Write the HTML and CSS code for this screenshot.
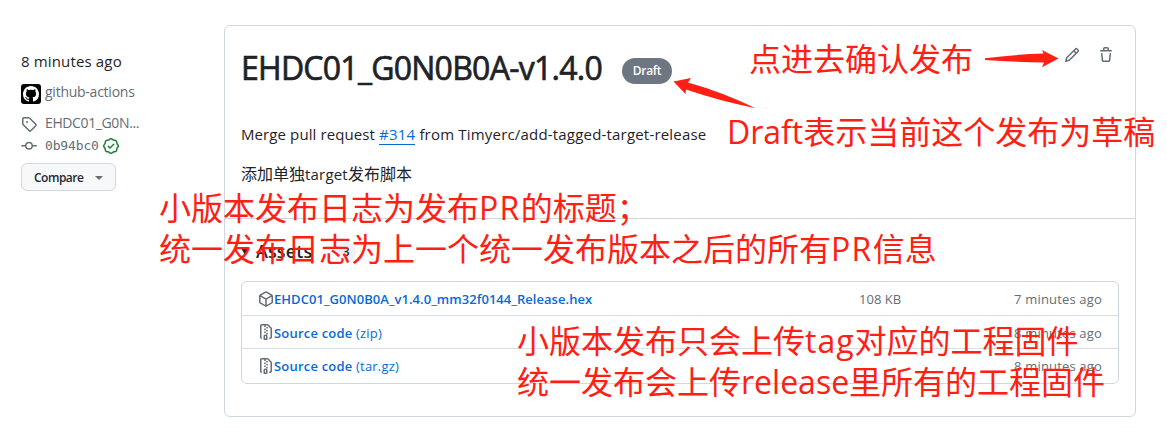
FILE: index.html
```html
<!DOCTYPE html>
<html lang="zh-CN">
<head>
<meta charset="utf-8">
<title>EHDC01_G0N0B0A-v1.4.0</title>
<link rel="stylesheet" href="styles.css">
</head>
<body>
<div class="page">
  <aside class="meta">
    <div class="meta-date"><span class="t-date">8 minutes ago</span></div>
    <div class="meta-author">
      <svg class="avatar" width="20" height="20" viewBox="0 0 20 20"><rect width="20" height="20" rx="3" fill="#000"/><path transform="translate(2 2)" fill="#fff" d="M8 0c4.42 0 8 3.58 8 8a8.013 8.013 0 0 1-5.45 7.59c-.4.08-.55-.17-.55-.38 0-.27.01-1.13.01-2.2 0-.75-.25-1.23-.54-1.48 1.78-.2 3.65-.88 3.65-3.95 0-.88-.31-1.59-.82-2.15.08-.2.36-1.02-.08-2.12 0 0-.67-.22-2.2.82-.64-.18-1.32-.27-2-.27-.68 0-1.36.09-2 .27-1.53-1.03-2.2-.82-2.2-.82-.44 1.1-.16 1.92-.08 2.12-.51.56-.82 1.28-.82 2.15 0 3.06 1.86 3.75 3.64 3.95-.23.2-.44.55-.51 1.07-.46.21-1.61.55-2.33-.66-.15-.24-.6-.83-1.23-.82-.67.01-.27.38.01.53.34.19.73.9.82 1.13.16.45.68 1.31 2.69.94 0 .67.01 1.3.01 1.49 0 .21-.15.45-.55.38A7.995 7.995 0 0 1 0 8c0-4.42 3.58-8 8-8Z"/></svg>
      <span class="t-author">github-actions</span>
    </div>
    <div class="meta-tag">
      <svg class="icon" width="16" height="16" viewBox="0 0 16 16"><path d="M1 7.775V2.75C1 1.784 1.784 1 2.75 1h5.025c.464 0 .91.184 1.238.513l6.25 6.25a1.75 1.75 0 0 1 0 2.474l-5.026 5.026a1.75 1.75 0 0 1-2.474 0l-6.25-6.25A1.752 1.752 0 0 1 1 7.775Zm1.5 0c0 .066.026.13.073.177l6.25 6.25a.25.25 0 0 0 .354 0l5.025-5.025a.25.25 0 0 0 0-.354l-6.25-6.25a.25.25 0 0 0-.177-.073H2.75a.25.25 0 0 0-.25.25ZM6 5a1 1 0 1 1 0 2 1 1 0 0 1 0-2Z"/></svg>
      <span class="t-tag">EHDC01_G0N...</span>
    </div>
    <div class="meta-commit">
      <svg class="icon" width="16" height="16" viewBox="0 0 16 16"><path d="M11.93 8.5a4.002 4.002 0 0 1-7.86 0H.75a.75.75 0 0 1 0-1.5h3.32a4.002 4.002 0 0 1 7.86 0h3.32a.75.75 0 0 1 0 1.5Zm-1.43-.75a2.5 2.5 0 1 0-5 0 2.5 2.5 0 0 0 5 0Z"/></svg>
      <code class="t-sha">0b94bc0</code>
      <svg class="verified" width="16" height="16" viewBox="0 0 16 16"><path d="m9.585.52.929.68c.153.112.331.186.518.215l1.138.175a2.678 2.678 0 0 1 2.24 2.24l.174 1.139c.029.187.103.365.215.518l.68.928a2.677 2.677 0 0 1 0 3.17l-.68.928a1.174 1.174 0 0 0-.215.518l-.175 1.138a2.678 2.678 0 0 1-2.241 2.241l-1.138.175a1.17 1.17 0 0 0-.518.215l-.928.68a2.677 2.677 0 0 1-3.17 0l-.928-.68a1.174 1.174 0 0 0-.518-.215L3.83 14.41a2.678 2.678 0 0 1-2.24-2.24l-.175-1.138a1.17 1.17 0 0 0-.215-.518l-.68-.928a2.677 2.677 0 0 1 0-3.17l.68-.928c.112-.153.186-.331.215-.518l.175-1.14a2.678 2.678 0 0 1 2.24-2.24l1.139-.175c.187-.029.365-.103.518-.215l.928-.68a2.677 2.677 0 0 1 3.17 0ZM7.303 1.728l-.927.68a2.67 2.67 0 0 1-1.18.489l-1.137.174a1.179 1.179 0 0 0-.987.987l-.174 1.136a2.677 2.677 0 0 1-.489 1.18l-.68.928a1.18 1.18 0 0 0 0 1.394l.68.927c.256.348.424.753.489 1.18l.174 1.137c.078.509.478.909.987.987l1.136.174a2.67 2.67 0 0 1 1.18.489l.928.68c.414.305.979.305 1.394 0l.927-.68a2.67 2.67 0 0 1 1.18-.489l1.137-.174a1.18 1.18 0 0 0 .987-.987l.174-1.136a2.67 2.67 0 0 1 .489-1.18l.68-.928a1.176 1.176 0 0 0 0-1.394l-.68-.927a2.686 2.686 0 0 1-.489-1.18l-.174-1.137a1.179 1.179 0 0 0-.987-.987l-1.136-.174a2.677 2.677 0 0 1-1.18-.489l-.928-.68a1.176 1.176 0 0 0-1.394 0ZM11.28 6.78l-3.75 3.75a.75.75 0 0 1-1.06 0L4.72 8.78a.751.751 0 0 1 .018-1.042.751.751 0 0 1 1.042-.018L7 8.94l3.22-3.22a.751.751 0 0 1 1.042.018.751.751 0 0 1 .018 1.042Z"/></svg>
    </div>
    <button class="compare"><span class="t-compare">Compare</span><span class="caret"></span></button>
  </aside>

  <main class="card">
    <section class="release">
      <header class="head">
        <h1 class="title">EHDC01_G0N0B0A-v1.4.0</h1>
        <span class="badge">Draft</span>
        <div class="actions">
          <svg class="icon" width="16" height="16" viewBox="0 0 16 16"><path d="M11.013 1.427a1.75 1.75 0 0 1 2.474 0l1.086 1.086a1.75 1.75 0 0 1 0 2.474l-8.61 8.61c-.21.21-.47.364-.756.445l-3.251.93a.75.75 0 0 1-.927-.928l.929-3.25c.081-.286.235-.547.445-.758l8.61-8.61Zm.176 4.823L9.75 4.81l-6.286 6.287a.253.253 0 0 0-.064.108l-.558 1.953 1.953-.558a.253.253 0 0 0 .108-.064Zm1.238-3.763a.25.25 0 0 0-.354 0L10.811 3.75l1.439 1.44 1.263-1.263a.25.25 0 0 0 0-.354Z"/></svg>
          <svg class="icon" width="16" height="16" viewBox="0 0 16 16"><path d="M11 1.75V3h2.25a.75.75 0 0 1 0 1.5H2.75a.75.75 0 0 1 0-1.5H5V1.75C5 .784 5.784 0 6.75 0h2.5C10.216 0 11 .784 11 1.75ZM4.496 6.675l.66 6.6a.25.25 0 0 0 .249.225h5.19a.25.25 0 0 0 .249-.225l.66-6.6a.75.75 0 0 1 1.492.149l-.66 6.6A1.748 1.748 0 0 1 10.595 15h-5.19a1.75 1.75 0 0 1-1.741-1.575l-.66-6.6a.75.75 0 1 1 1.492-.15ZM6.5 1.75V3h3V1.75a.25.25 0 0 0-.25-.25h-2.5a.25.25 0 0 0-.25.25Z"/></svg>
        </div>
      </header>
      <p class="body-text"><span class="latin"><span class="lead">Merge pull request</span> <a class="pr" href="#">#314</a> from Timyerc/add-tagged-target-release</span></p>
      <p class="body-text second">添加单独<span class="latin">target</span>发布脚本</p>
    </section>
    <section class="assets">
      <div class="assets-head"><span class="disclosure"></span><span class="t-assets">Assets</span><span class="counter">3</span></div>
      <ul class="list">
        <li class="row first">
          <svg class="icon" width="16" height="16" viewBox="0 0 16 16"><path d="m8.878.392 5.25 3.045c.54.314.872.89.872 1.514v6.098a1.75 1.75 0 0 1-.872 1.514l-5.25 3.045a1.75 1.75 0 0 1-1.756 0l-5.25-3.045A1.75 1.75 0 0 1 1 11.049V4.951c0-.624.332-1.201.872-1.514L7.122.392a1.75 1.75 0 0 1 1.756 0ZM7.875 1.69l-4.63 2.685L8 7.133l4.755-2.758-4.63-2.685a.248.248 0 0 0-.25 0ZM2.5 5.677v5.372c0 .09.047.171.125.216l4.625 2.683V8.432Zm6.25 8.271 4.625-2.683a.25.25 0 0 0 .125-.216V5.677L8.75 8.432Z"/></svg>
          <a class="name t-hex" href="#"><b>EHDC01_G0N0B0A_v1.4.0_mm32f0144_Release.hex</b></a>
          <span class="size">108 KB</span><span class="when">7 minutes ago</span>
        </li>
        <li class="row middle">
          <svg class="icon" width="16" height="16" viewBox="0 0 16 16"><path d="M3.5 1.75v11.5c0 .09.048.173.126.217a.75.75 0 0 1-.752 1.298A1.748 1.748 0 0 1 2 13.25V1.75C2 .784 2.784 0 3.75 0h5.586c.464 0 .909.185 1.237.513l2.914 2.914c.329.328.513.773.513 1.237v8.586A1.75 1.75 0 0 1 12.25 15h-.5a.75.75 0 0 1 0-1.5h.5a.25.25 0 0 0 .25-.25V4.664a.25.25 0 0 0-.073-.177L9.513 1.573a.25.25 0 0 0-.177-.073H7.25a.75.75 0 0 1 0 1.5h-.5a.75.75 0 0 1 0-1.5h-3a.25.25 0 0 0-.25.25Zm3.75 8.75h.5c.966 0 1.75.784 1.75 1.75v3a.75.75 0 0 1-.75.75h-2.5a.75.75 0 0 1-.75-.75v-3c0-.966.784-1.75 1.75-1.75ZM6 5.25a.75.75 0 0 1 .75-.75h.5a.75.75 0 0 1 0 1.5h-.5A.75.75 0 0 1 6 5.25Zm.75 2.25h.5a.75.75 0 0 1 0 1.5h-.5a.75.75 0 0 1 0-1.5ZM8 6.75A.75.75 0 0 1 8.75 6h.5a.75.75 0 0 1 0 1.5h-.5A.75.75 0 0 1 8 6.75ZM8.75 3h.5a.75.75 0 0 1 0 1.5h-.5a.75.75 0 0 1 0-1.5ZM8 9.75A.75.75 0 0 1 8.75 9h.5a.75.75 0 0 1 0 1.5h-.5A.75.75 0 0 1 8 9.75Zm-1 2.5v2.25h1v-2.25a.25.25 0 0 0-.25-.25h-.5a.25.25 0 0 0-.25.25Z"/></svg>
          <a class="name" href="#"><b>Source code</b> <span class="ext">(zip)</span></a>
          <span class="when">8 minutes ago</span>
        </li>
        <li class="row last">
          <svg class="icon" width="16" height="16" viewBox="0 0 16 16"><path d="M3.5 1.75v11.5c0 .09.048.173.126.217a.75.75 0 0 1-.752 1.298A1.748 1.748 0 0 1 2 13.25V1.75C2 .784 2.784 0 3.75 0h5.586c.464 0 .909.185 1.237.513l2.914 2.914c.329.328.513.773.513 1.237v8.586A1.75 1.75 0 0 1 12.25 15h-.5a.75.75 0 0 1 0-1.5h.5a.25.25 0 0 0 .25-.25V4.664a.25.25 0 0 0-.073-.177L9.513 1.573a.25.25 0 0 0-.177-.073H7.25a.75.75 0 0 1 0 1.5h-.5a.75.75 0 0 1 0-1.5h-3a.25.25 0 0 0-.25.25Zm3.75 8.75h.5c.966 0 1.75.784 1.75 1.75v3a.75.75 0 0 1-.75.75h-2.5a.75.75 0 0 1-.75-.75v-3c0-.966.784-1.75 1.75-1.75ZM6 5.25a.75.75 0 0 1 .75-.75h.5a.75.75 0 0 1 0 1.5h-.5A.75.75 0 0 1 6 5.25Zm.75 2.25h.5a.75.75 0 0 1 0 1.5h-.5a.75.75 0 0 1 0-1.5ZM8 6.75A.75.75 0 0 1 8.75 6h.5a.75.75 0 0 1 0 1.5h-.5A.75.75 0 0 1 8 6.75ZM8.75 3h.5a.75.75 0 0 1 0 1.5h-.5a.75.75 0 0 1 0-1.5ZM8 9.75A.75.75 0 0 1 8.75 9h.5a.75.75 0 0 1 0 1.5h-.5A.75.75 0 0 1 8 9.75Zm-1 2.5v2.25h1v-2.25a.25.25 0 0 0-.25-.25h-.5a.25.25 0 0 0-.25.25Z"/></svg>
          <a class="name" href="#"><b>Source code</b> <span class="ext">(tar.gz)</span></a>
          <span class="when">8 minutes ago</span>
        </li>
      </ul>
    </section>
  </main>
</div>

<!-- Red annotations drawn over the release page -->
<svg class="arrows" width="1167" height="428" viewBox="0 0 1167 428">
  <path d="M673.5 81.5 691 78 688 82.5 Q722 92 755.500 108.200 Q720 101 686 89.500 L685.500 94Z"/>
  <path d="M985 58.300 Q1014 54.500 1043.500 53.500 L1042 50 1058.500 58.500 1042 67.200 1044 62.500 Q1014 62 985 60Z"/>
</svg>
<div class="note note-edit">点进去确认发布</div>
<div class="note note-draft"><span class="n-draft">Draft</span>表示当前这个发布为草稿</div>
<div class="note note-log">小版本发布日志为发布<span class="n-pr">PR</span>的标题；<br>统一发布日志为上一个统一发布版本之后的所有<span class="n-pr">PR</span>信息</div>
<div class="note note-assets">小版本发布只会上传<span class="n-tag">tag</span>对应的工程固件<br>统一发布会上传<span class="n-rel">release</span>里所有的工程固件</div>
</body>
</html>
```

FILE: styles.css
```css
* { box-sizing: border-box; }
body {
  margin: 0;
  background: #fff;
  color: #1f2328;
  font: 14px/20px "Open Sans", "Noto Sans", "Noto Sans CJK SC", sans-serif;
  width: 1167px;
  height: 428px;
  overflow: hidden;
  position: relative;
}
.page { display: flex; padding: 25px 0 0 21px; }
.icon { fill: #656d76; flex: none; }
a { color: #0969da; text-decoration: none; }

/* Left column */
.meta { width: 203px; flex: none; padding-top: 26px; color: #656d76; white-space: nowrap; }
.meta-date { color: #1f2328; font-size: 15px; height: 20px; letter-spacing: .15px; }
.meta-author { display: flex; align-items: center; gap: 4px; margin-top: 12px; height: 20px; letter-spacing: -.25px; }
.meta-author .t-author { margin-top: -2px; }
.avatar { margin-top: 1px; }
.meta-tag { display: flex; align-items: center; gap: 8px; margin-top: 11px; height: 20px; letter-spacing: -.38px; }
.meta-tag .t-tag { margin-top: -2px; }
.meta-commit { display: flex; align-items: center; margin-top: 2px; height: 20px; }
.t-sha { font: 13px/20px "DejaVu Sans Mono", monospace; letter-spacing: -.15px; margin-left: 8px; }
.verified { fill: #1a7f37; margin-left: 4px; }
.compare {
  display: flex; align-items: center; gap: 12px;
  width: 95px; height: 28px; margin-top: 7px; padding: 0 12px;
  border: 1px solid #d0d7de; border-radius: 6px; background: #f6f8fa;
  color: #24292f; font: 600 12px/20px "Open Sans", sans-serif; letter-spacing: -.5px;
}
.t-compare { padding-top: 1px; }
.caret { margin-top: 1px; border: 4px solid transparent; border-top-color: #656d76; border-bottom: 0; }

/* Release card */
.card { width: 912px; height: 392px; border: 1px solid #d0d7de; border-radius: 6px; }
.release { height: 193px; padding: 20px 16px 0; border-bottom: 1px solid #d0d7de; }
.head { display: flex; height: 48px; align-items: center; }
.title { margin: -4px 0 0; font-size: 32px; line-height: 44px; font-weight: 400; -webkit-text-stroke: .7px #1f2328; letter-spacing: -.74px; white-space: nowrap; width: 381px; }
.badge {
  width: 50px; height: 26px; margin-top: 2px; border-radius: 13px; background: #6e7781; color: #fff;
  font-size: 12px; font-weight: 600; line-height: 26px; letter-spacing: -.35px; text-align: center;
}
.actions { display: flex; gap: 18px; margin: 1px 5px 0 auto; align-self: flex-start; }
.body-text { margin: 28px 0 0; height: 24px; font-size: 16px; line-height: 24px; white-space: nowrap; }
.body-text.second { margin-top: 16px; }
.latin { font-size: 15px; letter-spacing: .19px; }
.lead { letter-spacing: .1px; }
.pr { border-bottom: 1px solid #0969da; }

.assets { padding: 19px 16px 0; }
.assets-head { display: flex; align-items: center; height: 26px; font-size: 18px; font-weight: 600; letter-spacing: .1px; }
.disclosure { border: 4px solid transparent; border-top: 7px solid #1f2328; border-bottom: 0; }
.t-assets { margin-left: 7px; }
.counter {
  width: 20px; height: 20px; margin: 2px 0 0 24px; border-radius: 10px; background: #eff1f3;
  font-size: 12px; font-weight: 600; line-height: 20px; text-align: center;
}
.list { list-style: none; margin: 17px 0 0; padding: 0; width: 878px; border: 1px solid #d0d7de; border-radius: 6px; }
.row { display: flex; align-items: center; height: 33px; padding: 0 16px; border-bottom: 1px solid #d8dee4; white-space: nowrap; }
.row.first { height: 34px; }
.row.middle .name, .row.middle .when { padding-top: 2px; }
.row.last { height: 34px; border-bottom: 0; }
.name { flex: 1; font-size: 13px; letter-spacing: .2px; }
.name b { font-weight: 600; }
.t-hex { letter-spacing: .05px; }
.size { width: 155px; font-size: 13px; color: #656d76; }
.when { color: #656d76; font-size: 13px; letter-spacing: .17px; }

/* Annotations */
.arrows { position: absolute; left: 0; top: 0; fill: #ff2013; }
.note {
  position: absolute; white-space: nowrap; color: #ff2013;
  font: 32px/41px "Open Sans", "Noto Sans CJK SC", sans-serif;
}
.note-edit { left: 749px; top: 38px; }
.note-draft { left: 727px; top: 111px; }
.note-log { left: 159px; top: 187px; }
.note-assets { left: 517px; top: 320px; }
.n-pr { letter-spacing: 1.3px; }
.n-tag { letter-spacing: 1px; }
```
